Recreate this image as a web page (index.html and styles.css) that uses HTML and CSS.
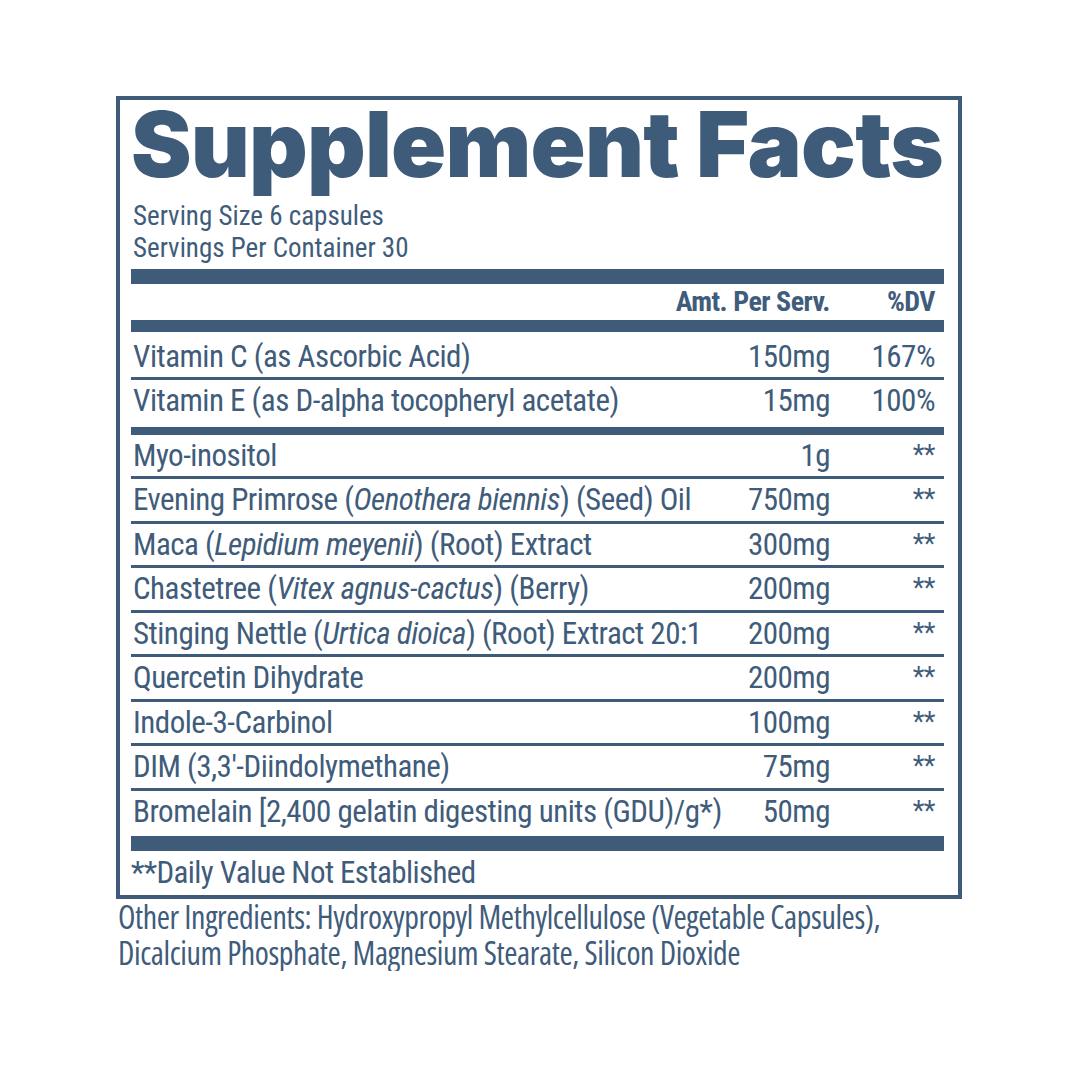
FILE: index.html
```html
<!doctype html>
<html lang="en">
<head>
    <meta charset="utf-8">
    <title>Supplement Facts</title>
    <link rel="stylesheet" href="styles.css">
</head>
<body>
    <div class="page">
        <div class="facts">
            <h1 class="facts-title">Supplement Facts</h1>
            <div class="serving">
                <div>Serving Size 6 capsules</div>
                <div>Servings Per Container 30</div>
            </div>
            <div class="bar bar-top"></div>
            <div class="head-row">
                <span class="amt">Amt. Per Serv.</span>
                <span class="dv">%DV</span>
            </div>
            <div class="bar bar-head"></div>

            <div class="row row-first">
                <span class="name">Vitamin C (as Ascorbic Acid)</span>
                <span class="amt">150mg</span>
                <span class="dv">167%</span>
            </div>
            <div class="row row-vit-last">
                <span class="name">Vitamin E (as D-alpha tocopheryl acetate)</span>
                <span class="amt">15mg</span>
                <span class="dv">100%</span>
            </div>
            <div class="bar bar-split"></div>

            <div class="row">
                <span class="name">Myo-inositol</span>
                <span class="amt">1g</span>
                <span class="dv star">**</span>
            </div>
            <div class="row">
                <span class="name">Evening Primrose (<i>Oenothera biennis</i>) (Seed) Oil</span>
                <span class="amt">750mg</span>
                <span class="dv star">**</span>
            </div>
            <div class="row">
                <span class="name">Maca (<i>Lepidium meyenii</i>) (Root) Extract</span>
                <span class="amt">300mg</span>
                <span class="dv star">**</span>
            </div>
            <div class="row">
                <span class="name">Chastetree (<i>Vitex agnus-cactus</i>) (Berry)</span>
                <span class="amt">200mg</span>
                <span class="dv star">**</span>
            </div>
            <div class="row">
                <span class="name">Stinging Nettle (<i>Urtica dioica</i>) (Root) Extract 20:1</span>
                <span class="amt">200mg</span>
                <span class="dv star">**</span>
            </div>
            <div class="row">
                <span class="name">Quercetin Dihydrate</span>
                <span class="amt">200mg</span>
                <span class="dv star">**</span>
            </div>
            <div class="row">
                <span class="name">Indole-3-Carbinol</span>
                <span class="amt">100mg</span>
                <span class="dv star">**</span>
            </div>
            <div class="row">
                <span class="name">DIM (3,3'-Diindolymethane)</span>
                <span class="amt">75mg</span>
                <span class="dv star">**</span>
            </div>
            <div class="row row-last">
                <span class="name">Bromelain [2,400 gelatin digesting units (GDU)/g*)</span>
                <span class="amt">50mg</span>
                <span class="dv star">**</span>
            </div>
            <div class="bar bar-bottom"></div>

            <p class="footnote">**Daily Value Not Established</p>
        </div>

        <div class="other">
            <div>Other Ingredients: Hydroxypropyl Methylcellulose (Vegetable Capsules),</div>
            <div>Dicalcium Phosphate, Magnesium Stearate, Silicon Dioxide</div>
        </div>
    </div>
</body>
</html>
```
FILE: styles.css
```css
html {
    background: #fff;
}

body {
    margin: 0;
    color: #405c7b;
    font-family: "Roboto Condensed", Roboto, sans-serif;
}

.page {
    padding: 96px 0 0 116px;
}

/* label box */
.facts {
    box-sizing: border-box;
    width: 846px;
    border: 4px solid #3f5b7a;
    padding: 0 14px 0 11px;
}

.facts-title {
    margin: 4px 0 0;
    font-family: Inter, sans-serif;
    font-weight: 900;
    font-size: 91px;
    line-height: 80px;
    letter-spacing: -0.8px;
    color: #3f5b7a;
    white-space: nowrap;
}

.serving {
    margin-top: 16px;
    padding-left: 2px;
    font-size: 27px;
    line-height: 32px;
}

.bar {
    background: #3f5b7a;
}

.bar-top {
    margin-top: 5px;
    height: 15px;
}

.bar-head {
    height: 12px;
}

.bar-split {
    height: 8px;
}

.bar-bottom {
    height: 15px;
}

.head-row {
    display: flex;
    justify-content: flex-end;
    font-weight: 700;
    font-size: 28px;
    line-height: 36px;
    letter-spacing: -0.5px;
    white-space: nowrap;
}

/* ingredient rows */
.row {
    display: flex;
    padding-left: 2px;
    font-size: 31px;
    line-height: 41.5px;
    letter-spacing: -0.5px;
    border-bottom: 3px solid #3f5b7a;
    white-space: nowrap;
}

.row-first {
    padding-top: 3.5px;
    line-height: 41.3px;
}

.row-vit-last {
    border-bottom: 0;
    line-height: 41.3px;
    padding-bottom: 5.7px;
}

.row-last {
    border-bottom: 0;
    padding-bottom: 3.5px;
}

.name {
    flex: 1;
    min-width: 0;
}

.amt {
    flex-shrink: 0;
    text-align: right;
}

.row .amt {
    width: 130px;
}

.dv {
    flex-shrink: 0;
    width: 105px;
    padding-right: 9px;
    text-align: right;
}

.star {
    font-size: 27px;
}

.footnote {
    margin: 0;
    font-size: 31px;
    line-height: 44px;
    letter-spacing: -0.6px;
}

.other {
    margin-left: 2px;
    font-family: "Open Sans", sans-serif;
    font-stretch: 75%;
    font-size: 32px;
    line-height: 36px;
    letter-spacing: -0.4px;
}
```
